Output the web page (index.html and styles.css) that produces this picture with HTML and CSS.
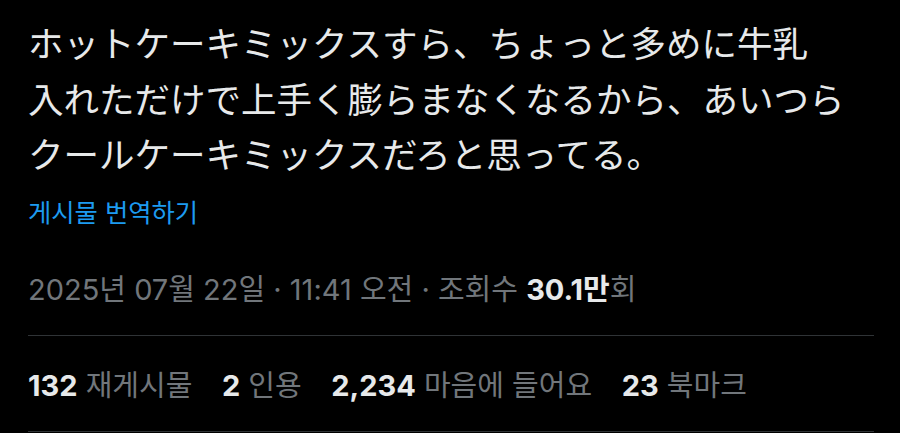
FILE: index.html
```html
<!DOCTYPE html>
<html lang="ja">
<head>
<meta charset="utf-8">
<link rel="stylesheet" href="styles.css">
</head>
<body>
<article class="tweet">
  <p class="body-text">ホットケーキミックスすら、ちょっと多めに牛乳<br>入れただけで上手く膨らまなくなるから、あいつら<br>クールケーキミックスだろと思ってる。</p>
  <a class="translate" lang="ko">게시물 번역하기</a>
  <div class="meta" lang="ko">2025년 07월 22일 · 11:41 오전 · 조회수 <b>30.1만</b>회</div>
  <div class="stats" lang="ko">
    <span class="stat"><b>132</b> 재게시물</span>
    <span class="stat"><b>2</b> 인용</span>
    <span class="stat"><b>2,234</b> 마음에 들어요</span>
    <span class="stat"><b>23</b> 북마크</span>
  </div>
</article>
</body>
</html>
```
FILE: styles.css
```css
html, body {
  margin: 0;
  padding: 0;
  background: #000;
}
.tweet {
  width: 846px;
  padding: 0 26px 0 28px;
  display: flex;
  flex-direction: column;
}
.body-text {
  margin: 14px 0 0 0;
  font-family: "Noto Sans CJK JP", sans-serif;
  font-size: 35.5px;
  line-height: 55.5px;
  color: #e7e9ea;
  white-space: nowrap;
}
.translate {
  margin-top: 17px;
  font-family: Inter, "Noto Sans CJK KR", sans-serif;
  font-size: 25.3px;
  line-height: 30px;
  color: #1d9bf0;
}
.meta {
  margin-top: 44px;
  font-family: Inter, "Noto Sans CJK KR", sans-serif;
  font-size: 29px;
  line-height: 36px;
  color: #71767b;
  padding-bottom: 27px;
  border-bottom: 1px solid #2f3336;
  white-space: nowrap;
}
.meta b {
  color: #e7e9ea;
  font-weight: 700;
}
.stats {
  display: flex;
  gap: 29.5px;
  height: 95px;
  align-items: center;
  border-bottom: 1px solid #2f3336;
  font-family: Inter, "Noto Sans CJK KR", sans-serif;
  font-size: 29px;
  color: #71767b;
  white-space: nowrap;
}
.stats b {
  color: #e7e9ea;
  font-weight: 700;
}
```
